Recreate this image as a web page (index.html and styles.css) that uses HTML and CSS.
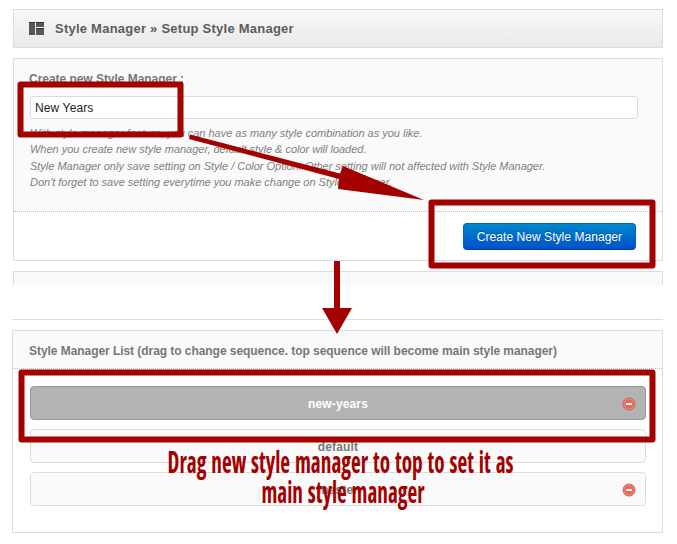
FILE: index.html
```html
<!DOCTYPE html>
<html lang="en">
<head>
<meta charset="utf-8">
<title>Style Manager</title>
<link rel="stylesheet" href="styles.css">
</head>
<body>
<main class="page">
  <header class="title-bar">
    <svg class="title-icon" width="15" height="13" viewBox="0 0 15 13"><path d="M0 0h6v13H0zM7 0h8v5H7zM7 6h8v7H7z" fill="#585858"/><path d="M0 0h6v1H0zM7 0h8v1H7zM7 6h8v1H7z" fill="#333"/></svg>
    <h1>Style Manager » Setup Style Manager</h1>
  </header>
  <section class="panel create">
    <div class="form">
      <label for="name">Create new Style Manager :</label>
      <input id="name" type="text" value="New Years">
      <p class="help"><span>With style manager feature, you can have as many style combination as you like.</span><span>When you create new style manager, default style &amp; color will loaded.</span><span>Style Manager only save setting on Style / Color Option. Other setting will not affected with Style Manager.</span><span>Don't forget to save setting everytime you make change on Style Manager.</span></p>
    </div>
    <div class="actions"><button type="button">Create New Style Manager</button></div>
  </section>
  <div class="panel-cut"></div>
  <div class="rule"></div>
  <section class="panel list">
    <h2>Style Manager List (drag to change sequence. top sequence will become main style manager)</h2>
    <ul>
      <li class="active"><span>new-years</span><svg class="remove" width="14" height="14" viewBox="0 0 14 14"><circle cx="7" cy="7" r="6" fill="#ec6856" stroke="#c8543f"/><circle cx="7" cy="7" r="5.200" fill="none" stroke="#f6a999" stroke-width=".6"/><path d="M4 6h6v2H4z" fill="#fff"/></svg></li>
      <li><span>default</span></li>
      <li><span>master</span><svg class="remove" width="14" height="14" viewBox="0 0 14 14"><circle cx="7" cy="7" r="6" fill="#ec6856" stroke="#c8543f"/><circle cx="7" cy="7" r="5.200" fill="none" stroke="#f6a999" stroke-width=".6"/><path d="M4 6h6v2H4z" fill="#fff"/></svg></li>
    </ul>
  </section>
</main>
<svg class="notes" width="677" height="544" viewBox="0 0 677 544">
  <g fill="none" stroke="#a40000" stroke-width="6" stroke-linejoin="round">
    <rect x="20.500" y="84.500" width="160" height="50"/>
    <rect x="431.500" y="202.500" width="221" height="63"/>
    <rect x="21.500" y="372.500" width="631" height="67"/>
  </g>
  <path d="M190 134.500L340 173.500L343 166L424 200L338 189L339 179L189 139z" fill="#a40000"/>
  <path d="M334 261h6v47h12l-15 26l-15-26h12z" fill="#a40000"/>
  <g class="caption">
    <text x="167.500" y="473" textLength="346" lengthAdjust="spacingAndGlyphs">Drag new style manager to top to set it as</text>
    <text x="261.500" y="503" textLength="163" lengthAdjust="spacingAndGlyphs">main style manager</text>
  </g>
</svg>
</body>
</html>
```
FILE: styles.css
```css
* { box-sizing: border-box; }
body {
  margin: 0;
  background: #fff;
  color: #777;
  font: 11px "Liberation Sans", Arial, sans-serif;
}
.page {
  height: 544px;
  padding: 9px 14px 0 13px;
  overflow: hidden;
}
.title-bar {
  display: flex;
  align-items: center;
  gap: 11px;
  width: 650px;
  height: 39px;
  padding-left: 15px;
  border: 1px solid #dcdcdc;
  background: linear-gradient(#f8f8f8, #e9e9e9);
}
h1 {
  margin: 0;
  color: #5c5c5c;
  font-size: 13px;
  letter-spacing: .24px;
  white-space: nowrap;
}
.panel { border: 1px solid #dcdcdc; }
.create {
  height: 203px;
  margin-top: 10px;
}
.form {
  height: 153px;
  padding: 13px 24px 0 16px;
  border-bottom: 1px dotted #c4c4c4;
  background: #fafafa;
}
label {
  display: block;
  height: 24px;
  margin-left: -1px;
  font-size: 12px;
  font-weight: bold;
  line-height: 15px;
  letter-spacing: -.04px;
}
input {
  display: block;
  width: 608px;
  height: 23px;
  padding: 0 4px;
  border: 1px solid #dcdcdc;
  border-radius: 3px;
  background: #fff;
  color: #222;
  font: 12px "Liberation Sans", Arial, sans-serif;
  letter-spacing: .12px;
}
.help {
  margin: 6px 0 0;
  color: #808080;
  font-style: italic;
  line-height: 16.4px;
  letter-spacing: -.015px;
  white-space: nowrap;
}
.help span { display: block; }
.actions {
  display: flex;
  justify-content: flex-end;
  padding: 11px 26px 0 0;
}
button {
  width: 173px;
  height: 27px;
  padding: 0;
  border: 1px solid #0064b8;
  border-bottom-color: #0044a8;
  border-radius: 4px;
  background: linear-gradient(#0088cc, #0050cc);
  color: #fff;
  font: 12px "Liberation Sans", Arial, sans-serif;
  letter-spacing: .05px;
  text-shadow: 0 -1px 0 rgba(0, 0, 0, .25);
}
.panel-cut {
  height: 14px;
  margin-top: 10px;
  border: 1px solid #dcdcdc;
  border-bottom: 0;
  background: #fafafa;
}
.rule {
  height: 1px;
  margin: 34px 0 0 -1px;
  background: #dcdcdc;
}
.list {
  width: 651px;
  height: 203px;
  margin: 10px 0 0 -1px;
}
h2 {
  height: 38px;
  margin: 0;
  padding-left: 16px;
  border-bottom: 1px dotted #c4c4c4;
  background: #fafafa;
  color: #777;
  font-size: 12px;
  line-height: 41px;
  letter-spacing: -.055px;
  white-space: nowrap;
}
ul {
  display: grid;
  gap: 9px;
  margin: 0;
  padding: 17px 16px 0 17px;
  list-style: none;
}
li {
  display: flex;
  align-items: center;
  justify-content: center;
  position: relative;
  height: 34px;
  border: 1px solid #dcdcdc;
  border-radius: 4px;
  background: #fafafa;
  font-size: 12px;
  font-weight: bold;
  letter-spacing: .15px;
}
li span { padding-top: 2px; }
.active {
  border-color: #999;
  background: #b3b3b3;
  color: #fff;
}
.remove {
  position: absolute;
  top: 10px;
  right: 9px;
}
.notes {
  position: absolute;
  inset: 0;
}
.caption {
  fill: #a40000;
  font: bold 30px "Open Sans", sans-serif;
  font-stretch: condensed;
  word-spacing: 1.5px;
}
```
